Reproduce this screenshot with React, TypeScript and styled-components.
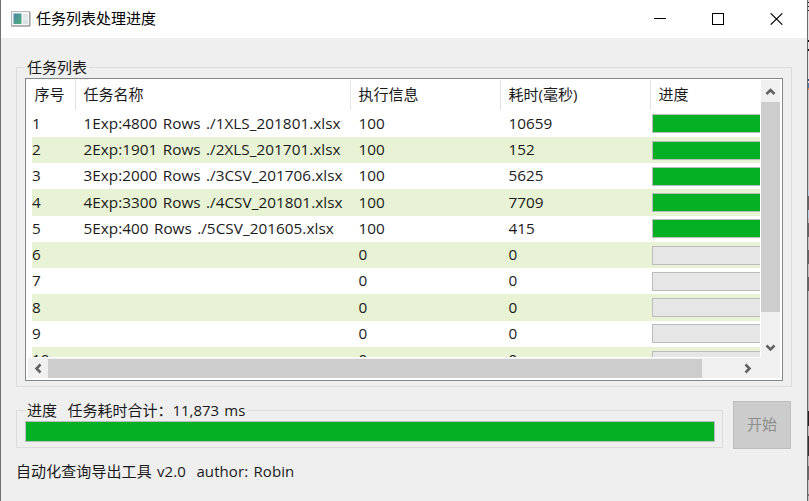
import React from "react";
import styled, { createGlobalStyle } from "styled-components";

const GlobalStyle = createGlobalStyle`
  body {
    margin: 0;
    overflow: hidden;
    background: #efefef;
  }
  * {
    box-sizing: border-box;
  }
`;

const Desktop = styled.div`
  display: flex;
  width: 809px;
  height: 501px;
  overflow: hidden;
  font-family: "Open Sans", "Noto Sans CJK SC", sans-serif;
  font-size: 15px;
  line-height: 20px;
  word-spacing: 1.3px;
  color: #1a1a1a;
  white-space: pre;
`;

const Window = styled.main`
  display: flex;
  flex-direction: column;
  width: 808px;
  border-left: 1px solid #707070;
  border-right: 1px solid #6a6a6a;
  background: #efefef;
`;

const EdgeStrip = styled.div`
  width: 1px;
  background: linear-gradient(
    #d5d5d5 0 2px, #222 2px 3px, #e4e4e4 3px 6px, #222 6px 7px, #e4e4e4 7px 10px,
    #222 10px 11px, #e4e4e4 11px 40px, #111 40px 42px, #e4e4e4 42px 49px, #111 49px 51px,
    #e4e4e4 51px 79px, #35557d 79px 81px, #e4e4e4 81px 83px, #4f7fae 83px 88px, #d58b51 88px 90px,
    #c7c7c7 90px 190px, #b5cfe3 190px 196px, #646464 196px 210px, #b5cfe3 210px 218px,
    #bdbdbd 218px 223px, #646464 223px 237px, #bdbdbd 237px 250px, #646464 250px 264px,
    #bdbdbd 264px 277px, #646464 277px 291px, #bdbdbd 291px 411px, #222 411px 426px,
    #bdbdbd 426px 436px, #333 436px 456px, #bdbdbd 456px 466px, #6b6b6b 466px 480px,
    #c6c6c6 480px 494px, #777 494px 496px, #c6c6c6 496px
  );
`;

const TitleBar = styled.header`
  display: flex;
  align-items: center;
  height: 38px;
  padding: 0 24px 0 10px;
  background: #fff;
  color: #000;
`;

const Title = styled.h1`
  flex: 1;
  margin: 0 0 2px 5px;
  font-size: 15px;
  font-weight: 400;
`;

const WindowButtons = styled.div`
  display: flex;
  gap: 46px;
`;

const WindowButton = styled.button`
  display: flex;
  padding: 0;
  border: 0;
  background: none;
`;

const Group = styled.fieldset<{ $width: number; $height: number }>`
  width: ${(p) => p.$width}px;
  height: ${(p) => p.$height}px;
  min-width: 0;
  margin: 0;
  padding: 0 8px 5px;
  border: 1px solid #dcdcdc;
`;

const GroupLegend = styled.legend`
  height: 21px;
  padding: 0 2px;
  line-height: 21px;
`;

const Body = styled.div`
  display: flex;
  flex-direction: column;
  align-items: flex-start;
  padding: 19px 0 0 15px;
`;

const ListFrame = styled.section`
  display: flex;
  flex-direction: column;
  width: 758px;
  height: 303px;
  padding: 1px 2px 2px 1px;
  border: 1px solid #828790;
  background: #fff;
`;

const ListTop = styled.div`
  display: flex;
  height: 278px;
`;

const Viewport = styled.div`
  width: 733px;
  height: 277px;
  overflow: hidden;
`;

const HeaderRow = styled.div`
  display: grid;
  grid-template-columns: 49px 275px 150px 150px 109px;
  height: 30.7px;
`;

const HeaderCell = styled.div`
  height: 30px;
  padding-left: 7.5px;
  border-right: 1px solid #e5e5e5;
  line-height: 29px;

  &:last-child {
    border-right: 0;
  }
`;

const Row = styled.div<{ $shaded: boolean }>`
  display: grid;
  grid-template-columns: 43px 275px 150px 150px 110px;
  align-items: center;
  height: 26.25px;
  margin-left: 5px;
  background: ${(p) => (p.$shaded ? "#e8f2d4" : "#fff")};
`;

const Cell = styled.div<{ $first?: boolean }>`
  padding: 0 0 2px ${(p) => (p.$first ? 0 : 8.4)}px;
  font-size: 15.3px;
  letter-spacing: 0.04px;
`;

const RowProgress = styled.div<{ $done: boolean }>`
  width: 148px;
  height: 19px;
  margin-left: 2px;
  border: 1px solid #bcbcbc;
  background: ${(p) => (p.$done ? "#06b025" : "#e6e6e6")};
`;

const VerticalScroll = styled.div`
  display: flex;
  flex-direction: column;
  align-items: center;
  justify-content: flex-start;
  width: 19px;
  margin-left: 1px;
  background: #f0f0f0;
`;

const HorizontalScroll = styled.div`
  display: flex;
  align-items: center;
  height: 20px;
  margin-left: 1px;
  background: #f0f0f0;
`;

const ScrollArrow = styled.span<{ $w: number; $h: number; $push?: boolean }>`
  display: flex;
  align-items: center;
  justify-content: center;
  width: ${(p) => p.$w}px;
  height: ${(p) => p.$h}px;
  margin-top: ${(p) => (p.$push ? "auto" : 0)};
`;

const Thumb = styled.div<{ $w: number; $h: number }>`
  width: ${(p) => p.$w}px;
  height: ${(p) => p.$h}px;
  background: #cdcdcd;
`;

const RightArrowSlot = styled.span`
  display: flex;
  margin-left: auto;
  margin-right: 27px;
`;

const BottomRow = styled.div`
  display: flex;
  align-items: flex-end;
  gap: 10px;
  margin-top: 13px;
`;

const TotalProgress = styled.div`
  width: 690px;
  height: 21px;
  border: 1px solid #bcbcbc;
  background: #06b025;
`;

const StartButton = styled.button`
  width: 58px;
  height: 48px;
  margin-bottom: -1px;
  padding: 0 0 3px;
  border: 1px solid #bfbfbf;
  background: #cccccc;
  color: #8d8d8d;
  font: inherit;
`;

const Footer = styled.footer`
  margin-top: 13px;
  letter-spacing: 0.08px;
`;

const tasks = [
  { name: "1Exp:4800 Rows ./1XLS_201801.xlsx", info: 100, time: 10659 },
  { name: "2Exp:1901 Rows ./2XLS_201701.xlsx", info: 100, time: 152 },
  { name: "3Exp:2000 Rows ./3CSV_201706.xlsx", info: 100, time: 5625 },
  { name: "4Exp:3300 Rows ./4CSV_201801.xlsx", info: 100, time: 7709 },
  { name: "5Exp:400 Rows ./5CSV_201605.xlsx", info: 100, time: 415 },
  { name: "", info: 0, time: 0 },
  { name: "", info: 0, time: 0 },
  { name: "", info: 0, time: 0 },
  { name: "", info: 0, time: 0 },
  { name: "", info: 0, time: 0 },
];

function AppIcon() {
  return (
    <svg width="20" height="16" viewBox="0 0 20 16">
      <defs>
        <linearGradient id="screen" x1="0" y1="0" x2="1" y2="1">
          <stop offset="0" stopColor="#4b86a8" />
          <stop offset="1" stopColor="#51ad7b" />
        </linearGradient>
      </defs>
      <rect x="0.5" y="0.5" width="18" height="14.5" fill="#f3f5f6" stroke="#b4b8bb" />
      <path d="M0.5 15h18.5V1" fill="none" stroke="#8e9396" />
      <rect x="2.5" y="2.5" width="8" height="10.5" fill="url(#screen)" />
      <rect x="12" y="3" width="5" height="4.5" fill="#e1e5e7" />
      <rect x="12" y="8.5" width="5" height="4.5" fill="#dce0e2" />
    </svg>
  );
}

const arrowPaths = {
  up: "M1.5 8L5.5 4L9.5 8",
  down: "M1.5 3.5L5.5 7.5L9.5 3.5",
  left: "M7.5 1.5L3.5 5.5L7.5 9.5",
  right: "M3.5 1.5L7.5 5.5L3.5 9.5",
};

function Arrow({ dir }: { dir: keyof typeof arrowPaths }) {
  return (
    <svg width="11" height="11" viewBox="0 0 11 11">
      <path d={arrowPaths[dir]} fill="none" stroke="#606060" strokeWidth="2.5" />
    </svg>
  );
}

export default function App() {
  return (
    <Desktop>
      <GlobalStyle />
      <Window>
        <TitleBar>
          <AppIcon />
          <Title>任务列表处理进度</Title>
          <WindowButtons>
            <WindowButton aria-label="最小化">
              <svg width="12" height="12"><path d="M0 5.5h12" stroke="#000" /></svg>
            </WindowButton>
            <WindowButton aria-label="最大化">
              <svg width="12" height="12"><rect x="0.5" y="0.5" width="11" height="11" fill="none" stroke="#000" /></svg>
            </WindowButton>
            <WindowButton aria-label="关闭">
              <svg width="13" height="12"><path d="M0.7 0.3L12.3 11.7M12.3 0.3L0.7 11.7" stroke="#000" strokeWidth="1.1" /></svg>
            </WindowButton>
          </WindowButtons>
        </TitleBar>
        <Body>
          <Group $width={776} $height={330}>
            <GroupLegend>任务列表</GroupLegend>
            <ListFrame>
              <ListTop>
                <Viewport>
                  <HeaderRow>
                    <HeaderCell>序号</HeaderCell>
                    <HeaderCell>任务名称</HeaderCell>
                    <HeaderCell>执行信息</HeaderCell>
                    <HeaderCell>耗时(毫秒)</HeaderCell>
                    <HeaderCell>进度</HeaderCell>
                  </HeaderRow>
                  {tasks.map((task, i) => (
                    <Row key={i} $shaded={i % 2 === 1}>
                      <Cell $first>{i + 1}</Cell>
                      <Cell>{task.name}</Cell>
                      <Cell>{task.info}</Cell>
                      <Cell>{task.time}</Cell>
                      <RowProgress $done={task.info === 100} />
                    </Row>
                  ))}
                </Viewport>
                <VerticalScroll>
                  <ScrollArrow $w={19} $h={22}><Arrow dir="up" /></ScrollArrow>
                  <Thumb $w={19} $h={210} />
                  <ScrollArrow $w={19} $h={21} $push><Arrow dir="down" /></ScrollArrow>
                </VerticalScroll>
              </ListTop>
              <HorizontalScroll>
                <ScrollArrow $w={20} $h={19}><Arrow dir="left" /></ScrollArrow>
                <Thumb $w={654} $h={19} />
                <RightArrowSlot><Arrow dir="right" /></RightArrowSlot>
              </HorizontalScroll>
            </ListFrame>
          </Group>
          <BottomRow>
            <Group $width={707} $height={48}>
              <GroupLegend>进度  任务耗时合计：11,873 ms</GroupLegend>
              <TotalProgress />
            </Group>
            <StartButton disabled>开始</StartButton>
          </BottomRow>
          <Footer>自动化查询导出工具 v2.0  author: Robin</Footer>
        </Body>
      </Window>
      <EdgeStrip />
    </Desktop>
  );
}
